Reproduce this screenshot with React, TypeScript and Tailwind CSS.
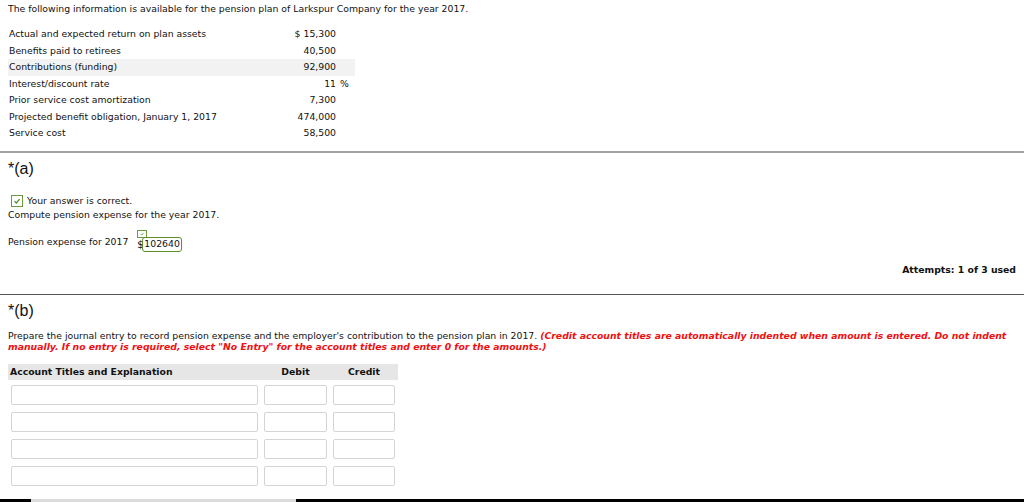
const rows: Array<{ label: string; value: string; pct?: boolean; shaded?: boolean }> = [
  { label: "Actual and expected return on plan assets", value: "$ 15,300" },
  { label: "Benefits paid to retirees", value: "40,500" },
  { label: "Contributions (funding)", value: "92,900", shaded: true },
  { label: "Interest/discount rate", value: "11", pct: true },
  { label: "Prior service cost amortization", value: "7,300" },
  { label: "Projected benefit obligation, January 1, 2017", value: "474,000" },
  { label: "Service cost", value: "58,500" },
];

function Check({ className }: { className: string }) {
  return (
    <span className={"inline-flex items-center justify-center border border-[#6a9a3a] bg-white " + className}>
      <svg viewBox="0 0 10 10" className="w-full h-full">
        <path d="M2.5 5.2 L4.3 7 L7.6 3.2" fill="none" stroke="#4d8a2a" strokeWidth="1.2" />
      </svg>
    </span>
  );
}

export default function App() {
  return (
    <div className="w-[1024px] h-[502px] bg-white text-[#111] overflow-hidden flex flex-col font-['DejaVu_Sans',sans-serif] text-[9.3px]">
      <p className="pl-[8px] pt-[3px] leading-[12px]">
        The following information is available for the pension plan of Larkspur Company for the year 2017.
      </p>

      <table className="self-start ml-[8px] mt-[11px] border-collapse">
        <tbody>
          {rows.map((r) => (
            <tr key={r.label} className={r.shaded ? "bg-[#f2f2f2]" : ""}>
              <td className="w-[262px] h-[16.5px] pl-[1px] py-0">{r.label}</td>
              <td className="w-[66px] text-right py-0">{r.value}</td>
              <td className="w-[19px] pl-[4px] py-0">{r.pct ? "%" : ""}</td>
            </tr>
          ))}
        </tbody>
      </table>

      <div className="mt-[9px] h-[2px] bg-[#a3a3a3]" />

      <div className="pl-[8px] pt-[7px] font-['Liberation_Sans',sans-serif] text-[16px] leading-[18px]">*(a)</div>

      <div className="pl-[11px] mt-[17px] flex items-center gap-[4px] leading-[12px]">
        <Check className="w-[12px] h-[12px]" />
        <span>Your answer is correct.</span>
      </div>
      <p className="pl-[8px] leading-[14px] mt-[1px]">Compute pension expense for the year 2017.</p>

      <div className="pl-[8px] mt-[8px] flex items-end leading-[12px]">
        <span className="pb-[2px]">Pension expense for 2017</span>
        <span className="ml-[9px] flex flex-col items-start">
          <Check className="w-[10px] h-[8px] mb-[1px]" />
          <span className="text-[10px] leading-[11px]">$</span>
        </span>
        <span className="ml-[-5px] mb-[-2px] h-[15px] px-[1px] border-[1.5px] border-[#5c8f24] rounded-[3px] text-[9.3px] leading-[12px] bg-white">
          102640
        </span>
      </div>

      <div className="mt-[14px] pr-[8px] text-right font-bold leading-[12px]">Attempts: 1 of 3 used</div>

      <div className="mt-[18px] h-[1px] bg-[#555]" />

      <div className="pl-[8px] pt-[7px] font-['Liberation_Sans',sans-serif] text-[16px] leading-[18px]">*(b)</div>

      <p className="pl-[8px] mt-[10px] leading-[11px]">
        Prepare the journal entry to record pension expense and the employer's contribution to the pension plan in 2017.{" "}
        <span className="text-[#f01010] italic font-bold">
          (Credit account titles are automatically indented when amount is entered. Do not indent manually. If no entry is required, select "No Entry" for the account titles and enter 0 for the amounts.)
        </span>
      </p>

      <div className="ml-[8px] mt-[12px] w-[390px]">
        <div className="flex h-[16px] items-center bg-[#e6e6e6] font-bold">
          <span className="w-[253px] pl-[2px]">Account Titles and Explanation</span>
          <span className="w-[69px] text-center">Debit</span>
          <span className="w-[68px] text-center">Credit</span>
        </div>
        <div className="flex flex-col gap-[7px] mt-[5px] pl-[3px]">
          {[0, 1, 2, 3].map((i) => (
            <div key={i} className="flex gap-[6px]">
              <div className="w-[247px] h-[20px] border border-[#d4d4d4] rounded-[2px]" />
              <div className="w-[63px] h-[20px] border border-[#d4d4d4] rounded-[2px]" />
              <div className="w-[62px] h-[20px] border border-[#d4d4d4] rounded-[2px]" />
            </div>
          ))}
        </div>
      </div>

      <div className="mt-auto flex h-[3px]">
        <div className="w-[31px] bg-black" />
        <div className="w-[265px] bg-[#dcdcdc]" />
        <div className="flex-1 bg-black" />
      </div>
    </div>
  );
}
